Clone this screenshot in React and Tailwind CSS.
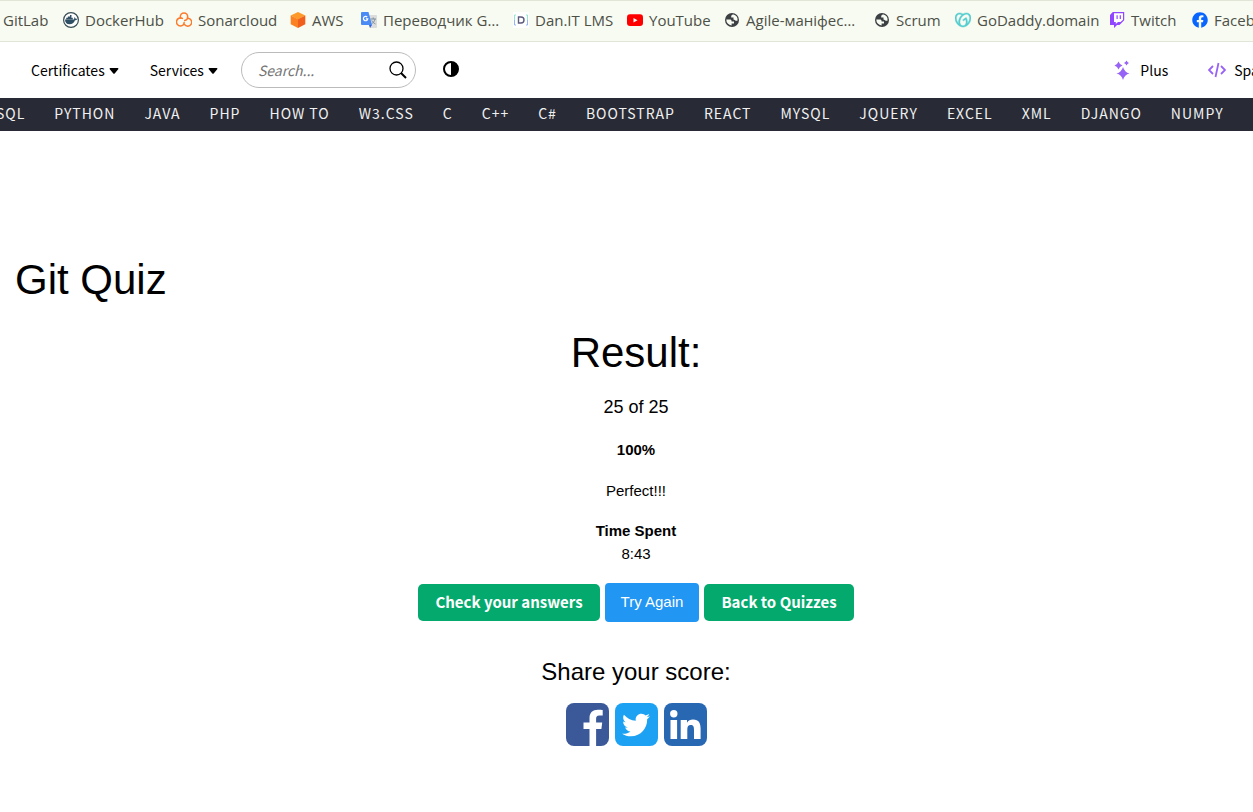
import { FaFacebook, FaTwitter } from "react-icons/fa";
import { SiGodaddy } from "react-icons/si";

const bookmarks = [
  { label: "GitLab", w: "w-11" },
  { label: "DockerHub", icon: Docker, w: "w-[97px]" },
  { label: "Sonarcloud", icon: Sonar, w: "w-[98px]" },
  { label: "AWS", icon: Cube, w: "w-[55px]" },
  { label: "Переводчик G…", icon: Translate, w: "w-[136px]" },
  { label: "Dan.IT LMS", icon: DanIt, w: "w-[98px]" },
  { label: "YouTube", icon: YouTube, w: "w-[81px]" },
  { label: "Agile-маніфес…", icon: Globe, w: "w-[134px]" },
  { label: "Scrum", icon: Globe, w: "w-[65px]" },
  { label: "GoDaddy.domain", icon: GoDaddy, w: "w-[138px]" },
  { label: "Twitch", icon: Twitch, w: "w-[67px]" },
  { label: "Facebook", icon: Facebook, w: "w-[90px]" },
];

const topics = ["SQL", "PYTHON", "JAVA", "PHP", "HOW TO", "W3.CSS", "C", "C++", "C#", "BOOTSTRAP", "REACT", "MYSQL", "JQUERY", "EXCEL", "XML", "DJANGO", "NUMPY"];

function Docker() {
  return (
    <svg viewBox="0 0 16 16" className="size-4">
      <circle cx="8" cy="8" r="7.400" fill="#fff" stroke="#394d54" strokeWidth="1.200" />
      <path d="M2 7.500h8.800c.6-.5.600-1.500.2-2.200 1 .1 1.500.8 1.600 1.400.6-.1 1.300 0 1.700.3-.4.900-1.400 1.300-2.300 1.300-1 2.700-2.800 4-5.500 4C3.600 12.300 2 10.700 2 7.500Z" fill="#2f5064" />
      <path d="M3.200 5.800h6.600v1.800H3.200ZM4.800 4.400h3.600v1.600H4.800ZM7 3h1.500v1.600H7Z" fill="#2f5064" />
    </svg>
  );
}

function Sonar() {
  return (
    <svg viewBox="0 0 16 16" className="size-4" fill="none" stroke="#fd7a2b" strokeWidth="1.500" strokeLinecap="round">
      <path d="M4.300 6V4.700a3.700 3.700 0 0 1 7.400 0c0 2.200-1.200 3.500-3 3.900" />
      <path d="M6.400 6.400A4 4 0 1 0 4.600 13.900c2 0 3.400-1.400 3.500-3.400" />
      <path d="M12 6.200a4 4 0 1 1-3.600 6.200" />
    </svg>
  );
}

function Cube() {
  return (
    <svg viewBox="0 0 16 16" className="size-4">
      <path d="M8 0 15.300 3.500 8 7.500.7 3.500Z" fill="#fd9a2a" />
      <path d="M.7 3.500 8 7.300V16L.7 12.300Z" fill="#fb8122" />
      <path d="M15.300 3.500 8 7.300V16l7.300-3.700Z" fill="#f0601c" />
    </svg>
  );
}

function Translate() {
  return (
    <svg viewBox="0 0 16 16" className="size-4">
      <path d="M6 3h9a1 1 0 0 1 1 1v11a1 1 0 0 1-1 1H9Z" fill="#dcdcdc" />
      <path d="M9.500 7h5.500M12.200 5.500V7M14 7c-.5 2.500-2 4-3.500 5M10.800 8.500c.8 1.700 2 2.700 3.700 3.500" stroke="#7b8f99" fill="none" />
      <path d="M8 13h3l-2 3Z" fill="#3367d6" />
      <path d="M1 0h6.500l3.500 13H1a1 1 0 0 1-1-1V1a1 1 0 0 1 1-1Z" fill="#4a8af5" />
      <path d="M6.200 5A2.200 2.200 0 1 0 6.800 6.800H4.800" stroke="#fff" strokeWidth="1.200" fill="none" />
    </svg>
  );
}

function DanIt() {
  return (
    <svg viewBox="0 0 16 16" className="size-4" fill="none">
      <path d="M0 0h16v16H0Z" fill="#fff" />
      <path d="M3 3H1.500v5M13 3h1.500v5" stroke="#8fe8cf" />
      <path d="M1.500 8v5H3M14.500 8v5H13" stroke="#93b5f5" />
      <path d="M5.500 5H8a3 3 0 0 1 0 6H5.500Z" stroke="#5c5a7d" strokeWidth="1.400" />
    </svg>
  );
}

function YouTube() {
  return (
    <svg viewBox="0 0 16 16" className="size-4">
      <rect y="2.300" width="16" height="11.700" rx="3" fill="#f00" />
      <path d="M6.500 5.900v4.600l4-2.300Z" fill="#fff" />
    </svg>
  );
}

function Globe() {
  return (
    <svg viewBox="0 0 16 16" className="size-4">
      <circle cx="8" cy="8" r="7" fill="#3c4043" />
      <path d="M2.300 7.600h3.300c1.500 0 2 .5 2 1.800H10v2.200H7.600v1.800A5.600 5.600 0 0 1 2.300 7.600Z" fill="#f8fbf2" />
      <path d="M9.700 2.600c-1.300 0-2.500.5-2.500 1.800v1h2.300v2c1 .1 1.700.5 2.100 1.300h1.900a5.600 5.600 0 0 0-3.800-6.100Z" fill="#f8fbf2" />
    </svg>
  );
}

function GoDaddy() {
  return <SiGodaddy className="size-4 text-[#54cdd0]" stroke="#54cdd0" strokeWidth="0.6" />;
}

function Twitch() {
  return (
    <svg viewBox="0 0 16 16" className="size-4">
      <path d="M3.800 0h11.400v8.300L10.500 13H8l-3 3v-3H1V3Z" fill="#9146ff" />
      <path d="M5 1.200h9v6.600L11.600 10H9l-2.200 2v-2H5Z" fill="#fff" />
      <path d="M7.500 3.300h1.200v3.600H7.500Zm3.200 0h1.200v3.600h-1.200Z" fill="#9146ff" />
    </svg>
  );
}

function Facebook() {
  return <FaFacebook className="size-4 text-[#0866ff]" />;
}

function Caret() {
  return (
    <svg viewBox="0 0 9 6" className="mt-0.5 h-1.5 w-2.5">
      <path d="M.8 0h7.400c.7 0 1 .7.500 1.200L5.200 5.500q-.7.700-1.400 0L.3 1.200C-.2.700.1 0 .8 0Z" />
    </svg>
  );
}

export default function App() {
  return (
    <div className="min-h-screen overflow-x-hidden bg-white text-[15px] text-black [font-family:'Liberation_Sans',sans-serif]">
      <nav aria-label="Bookmarks" className="flex h-[42px] gap-4 overflow-hidden border-y border-[#dfe6d8] bg-[#f8fbf2] pb-0.5 pl-[3px] text-[15px] text-[#4c5047] [font-family:'Open_Sans',sans-serif]">
        {bookmarks.map(({ label, icon: Icon, w }) => (
          <a key={label} href="#" className={`${w} flex shrink-0 items-center gap-1.5 whitespace-nowrap`}>
            {Icon && <span className="shrink-0"><Icon /></span>}
            {label}
          </a>
        ))}
      </nav>

      <header className="flex h-14 items-center overflow-hidden pl-[31px] text-[14px] [font-family:'Noto_Sans_CJK_SC',sans-serif]">
        <button className="flex shrink-0 items-center gap-1">Certificates<Caret /></button>
        <button className="ml-[31px] flex shrink-0 items-center gap-1">Services<Caret /></button>
        <form className="ml-[23px] flex h-9 w-[175px] shrink-0 items-center rounded-full border border-[#bbb] pr-2 pl-4">
          <input aria-label="Search" placeholder="Search..." className="w-full min-w-0 italic outline-none placeholder:text-[#757575]" />
          <button aria-label="Search" type="button">
            <svg viewBox="0 0 18 18" className="size-[18px]" fill="none" stroke="#000">
              <circle cx="7.500" cy="7.500" r="6.500" strokeWidth="1.300" />
              <path d="m12 12 5 5" strokeWidth="2" />
            </svg>
          </button>
        </form>
        <button aria-label="Toggle dark mode" className="mb-0.5 ml-[27px] shrink-0">
          <svg viewBox="0 0 16 16" className="size-4">
            <circle cx="8" cy="8" r="7" fill="none" stroke="#000" strokeWidth="2" />
            <path d="M8 1a7 7 0 0 1 0 14Z" />
          </svg>
        </button>
        <div className="-mr-[27px] ml-auto flex shrink-0 items-center gap-10">
          <a href="#" className="flex items-center gap-2">
            <svg viewBox="0 0 18 20" className="h-5 w-[18px]" fill="#9763f6">
              <path d="M9 7q1.500 5.300 6.500 6.500-5 1.200-6.500 6.500-1.500-5.300-6.500-6.500 5-1.200 6.500-6.500ZM4.500 1.500q1 3 4 4-3 1-4 4-1-3-4-4 3-1 4-4ZM12.500.5q.7 1.800 2.500 2.500-1.800.7-2.500 2.500-.7-1.800-2.500-2.500 1.800-.7 2.500-2.500Z" />
            </svg>
            Plus
          </a>
          <a href="#" className="flex items-center gap-2">
            <svg viewBox="0 0 18 16" className="h-4 w-[18px]" fill="none" stroke="#9763f6" strokeWidth="1.800">
              <path d="M5 4 1 8l4 4M13 4l4 4-4 4M10.500 1l-3 14" />
            </svg>
            Spaces
          </a>
        </div>
      </header>

      <nav aria-label="Topics" className="flex h-[33px] items-center gap-[29px] overflow-hidden bg-[#282a35] pb-0.5 text-[14px] tracking-[1px] text-[#f1f1f1] [font-family:'Noto_Sans_CJK_SC',sans-serif]">
        {topics.map((topic) => (
          <a key={topic} href="#" className={`${topic === "SQL" ? "-ml-[4px] " : ""}shrink-0 whitespace-nowrap`}>{topic}</a>
        ))}
      </nav>

      <main className="px-[15px] pt-[117px]">
        <h1 className="text-[42px] leading-[63px]">Git Quiz</h1>
        <section className="flex flex-col items-center pt-[10px] pl-[19px]">
          <h2 className="text-[42px] leading-[63px]">Result:</h2>
          <p className="mt-[10px] text-[18px] leading-[27px]">25 of 25</p>
          <p className="mt-[17px] leading-[23px] font-bold">100%</p>
          <p className="mt-[18px] leading-[23px]">Perfect!!!</p>
          <p className="mt-[17px] leading-[23px] font-bold">Time Spent</p>
          <p className="leading-[23px]">8:43</p>
          <div className="mt-[18px] flex items-center gap-[5px] text-white">
            <button className="h-[37px] rounded-[5px] bg-[#04aa6d] px-[17px] text-[15px] font-bold [font-family:'Noto_Sans_CJK_SC',sans-serif]">Check your answers</button>
            <button className="h-[39px] rounded bg-[#2196f3] px-4 text-[15px]">Try Again</button>
            <button className="h-[37px] rounded-[5px] bg-[#04aa6d] px-[17px] text-[15px] font-bold [font-family:'Noto_Sans_CJK_SC',sans-serif]">Back to Quizzes</button>
          </div>
          <h3 className="mt-8 text-[24px] leading-9">Share your score:</h3>
          <div className="mt-[13px] flex gap-[6px]">
            <a href="#" aria-label="Facebook">
              <svg viewBox="0 0 43 43" className="size-[43px]">
                <rect width="43" height="43" rx="8" fill="#3b5998" />
                <path d="M23.500 43V26h-6v-6.500h6V15c0-5.500 3.300-8.300 8.300-8.300 2.200 0 4.200.2 4.900.3v5.600h-3.400c-2.600 0-3.200 1.300-3.200 3.200v3.700h6.100l-.8 6.500h-5.300v17Z" fill="#fff" />
              </svg>
            </a>
            <a href="#" aria-label="Twitter" className="flex size-[43px] items-center justify-center rounded-lg bg-[#1da1f2] text-white">
              <FaTwitter className="size-7" />
            </a>
            <a href="#" aria-label="LinkedIn">
              <svg viewBox="0 0 43 43" className="size-[43px]">
                <rect width="43" height="43" rx="8" fill="#2867b2" />
                <circle cx="9.800" cy="10.800" r="3.700" fill="#fff" />
                <path d="M6.500 17h6.600v19H6.500Zm10.200 0H23v2.700c1.200-2 3.300-3.200 6-3.200 6 0 7.600 3.900 7.600 9.200V36H30V26.700c0-2.500-.6-4.600-3.300-4.600s-3.400 2-3.400 4.500V36h-6.600Z" fill="#fff" />
              </svg>
            </a>
          </div>
        </section>
      </main>
    </div>
  );
}
